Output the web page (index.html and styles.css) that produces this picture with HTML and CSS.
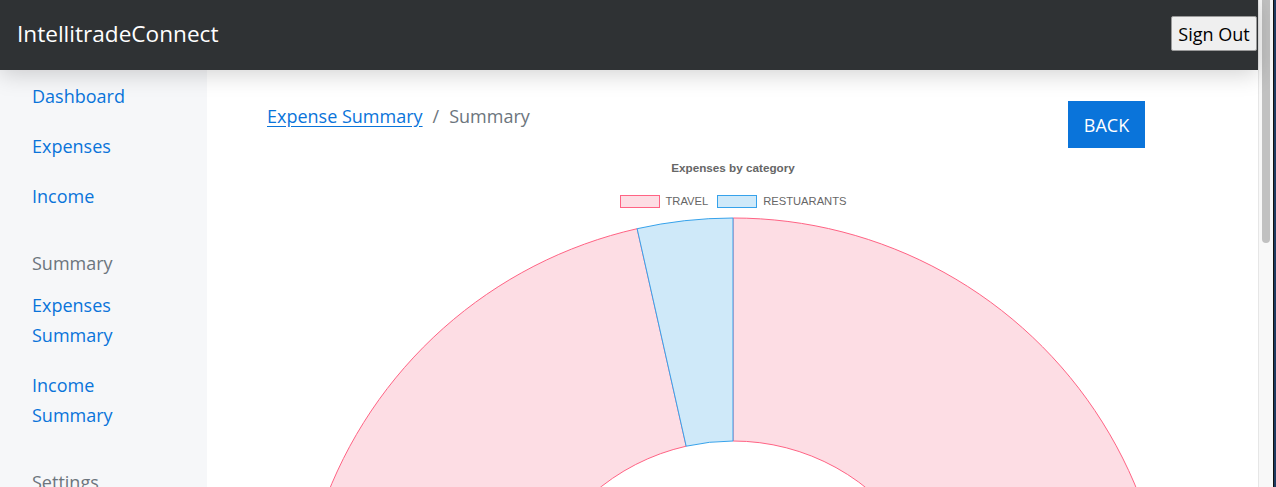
FILE: index.html
```html
<!DOCTYPE html>
<html lang="en">
<head>
<meta charset="utf-8">
<title>IntellitradeConnect</title>
<link rel="stylesheet" href="styles.css">
</head>
<body>
<div class="window">
  <div class="app">
    <header class="topbar">
      <div class="brand">IntellitradeConnect</div>
      <button class="signout" type="button">Sign Out</button>
    </header>
    <div class="body">
      <nav class="sidebar">
        <a class="nav-link" href="#">Dashboard</a>
        <a class="nav-link" href="#">Expenses</a>
        <a class="nav-link" href="#">Income</a>
        <div class="nav-heading">Summary</div>
        <a class="nav-link" href="#">Expenses Summary</a>
        <a class="nav-link" href="#">Income Summary</a>
        <div class="nav-heading">Settings</div>
      </nav>
      <main class="main">
        <div class="toprow">
          <div class="breadcrumb">
            <a class="crumb-link" href="#">Expense Summary</a>
            <span class="crumb-sep">/</span>
            <span class="crumb-current">Summary</span>
          </div>
          <button class="back" type="button">BACK</button>
        </div>
        <div class="chart">
          <div class="chart-title">Expenses by category</div>
          <div class="legend">
            <div class="legend-item"><span class="swatch swatch-travel"></span><span>TRAVEL</span></div>
            <div class="legend-item"><span class="swatch swatch-rest"></span><span>RESTUARANTS</span></div>
          </div>
          <svg class="donut" width="932" height="460" viewBox="0 0 932 460" xmlns="http://www.w3.org/2000/svg">
            <path d="M 466 6 A 436 436 0 1 1 370.14 16.7 L 419.17 234.2 A 213 213 0 1 0 466 229 Z" fill="#fddde4" stroke="#ff6384" stroke-width="1"/>
            <path d="M 370.14 16.7 A 436 436 0 0 1 466 6 L 466 229 A 213 213 0 0 0 419.17 234.2 Z" fill="#cfe9f9" stroke="#36a2eb" stroke-width="1"/>
          </svg>
        </div>
      </main>
    </div>
  </div>
  <div class="scrollbar"><div class="thumb"></div></div>
  <div class="edge"></div>
</div>
</body>
</html>
```

FILE: styles.css
```css
* { box-sizing: border-box; }
html, body {
  margin: 0;
  padding: 0;
  height: 100%;
  overflow: hidden;
  background: #fff;
}
body {
  font-family: "Open Sans", "Noto Sans", sans-serif;
}
.window {
  display: flex;
  width: 1276px;
  height: 487px;
  overflow: hidden;
}
.app {
  width: 1258px;
  flex: none;
  display: flex;
  flex-direction: column;
  position: relative;
}
.topbar {
  height: 70px;
  flex: none;
  background: #2f3234;
  display: flex;
  align-items: center;
  justify-content: space-between;
  padding: 0 1px 0 17px;
  position: relative;
  z-index: 2;
  box-shadow: 0 4px 22px rgba(0, 0, 0, 0.18);
}
.brand {
  color: #fff;
  font-size: 22.6px;
  margin-top: -4px;
}
.signout {
  font-family: "Open Sans", "Noto Sans", sans-serif;
  font-size: 18px;
  color: #000;
  background: #efefef;
  border: 1px solid #9a9a9a;
  border-radius: 2px;
  width: 86px;
  height: 35px;
  padding: 0;
  margin-top: -3px;
}
.body {
  flex: 1;
  display: flex;
  min-height: 0;
}
.sidebar {
  width: 207px;
  flex: none;
  background: #f6f7f9;
  padding: 1px 75px 0 32px;
  display: flex;
  flex-direction: column;
  align-items: flex-start;
}
.nav-link {
  display: block;
  color: #0a74da;
  text-decoration: none;
  font-size: 18px;
  line-height: 30px;
  padding: 10px 0;
}
.nav-heading {
  color: #6c757d;
  font-size: 18px;
  line-height: 30px;
  padding: 27px 0 2px;
}
.main {
  flex: 1;
  padding: 31px 59px 0 60px;
  display: flex;
  flex-direction: column;
}
.toprow {
  display: flex;
  justify-content: space-between;
  align-items: flex-start;
  height: 47px;
}
.breadcrumb {
  display: flex;
  align-items: center;
  font-size: 18px;
  line-height: 30px;
}
.crumb-link {
  color: #0a74da;
  text-decoration: underline;
  text-underline-offset: 3px;
}
.crumb-sep {
  color: #6c757d;
  padding: 0 10px;
}
.crumb-current {
  color: #6c757d;
}
.back {
  font-family: "Open Sans", "Noto Sans", sans-serif;
  background: #0a74da;
  color: #fff;
  border: none;
  font-size: 18px;
  width: 77px;
  height: 47px;
  margin-right: 54px;
  padding: 0;
}
.chart {
  margin-top: 2px;
  width: 932px;
  display: flex;
  flex-direction: column;
  align-items: center;
  font-family: "Liberation Sans", Arial, sans-serif;
  color: #666;
}
.chart-title {
  font-size: 11.7px;
  font-weight: bold;
  line-height: 34px;
  height: 34px;
  padding-top: 1px;
}
.legend {
  display: flex;
  gap: 9px;
  padding-top: 10px;
  height: 28px;
  font-size: 11.2px;
}
.legend-item {
  display: flex;
  align-items: flex-start;
  gap: 6px;
  line-height: 14px;
}
.swatch {
  width: 40px;
  height: 13px;
  margin-top: 1px;
  border: 1px solid;
  display: block;
}
.swatch-travel { background: #fddde4; border-color: #ff6384; }
.swatch-rest { background: #cfe9f9; border-color: #36a2eb; }
.donut {
  display: block;
  flex: none;
}
.scrollbar {
  width: 15px;
  flex: none;
  background: #f8f8f8;
  border-left: 1px solid #e6e6e6;
  padding: 0 3px 0 3px;
}
.thumb {
  width: 8px;
  height: 243px;
  background: #c1c1c1;
  border-radius: 0 0 4px 4px;
}
.edge {
  width: 3px;
  flex: none;
  background: #1f3a60;
  border-left: 1px solid #111;
}
```
